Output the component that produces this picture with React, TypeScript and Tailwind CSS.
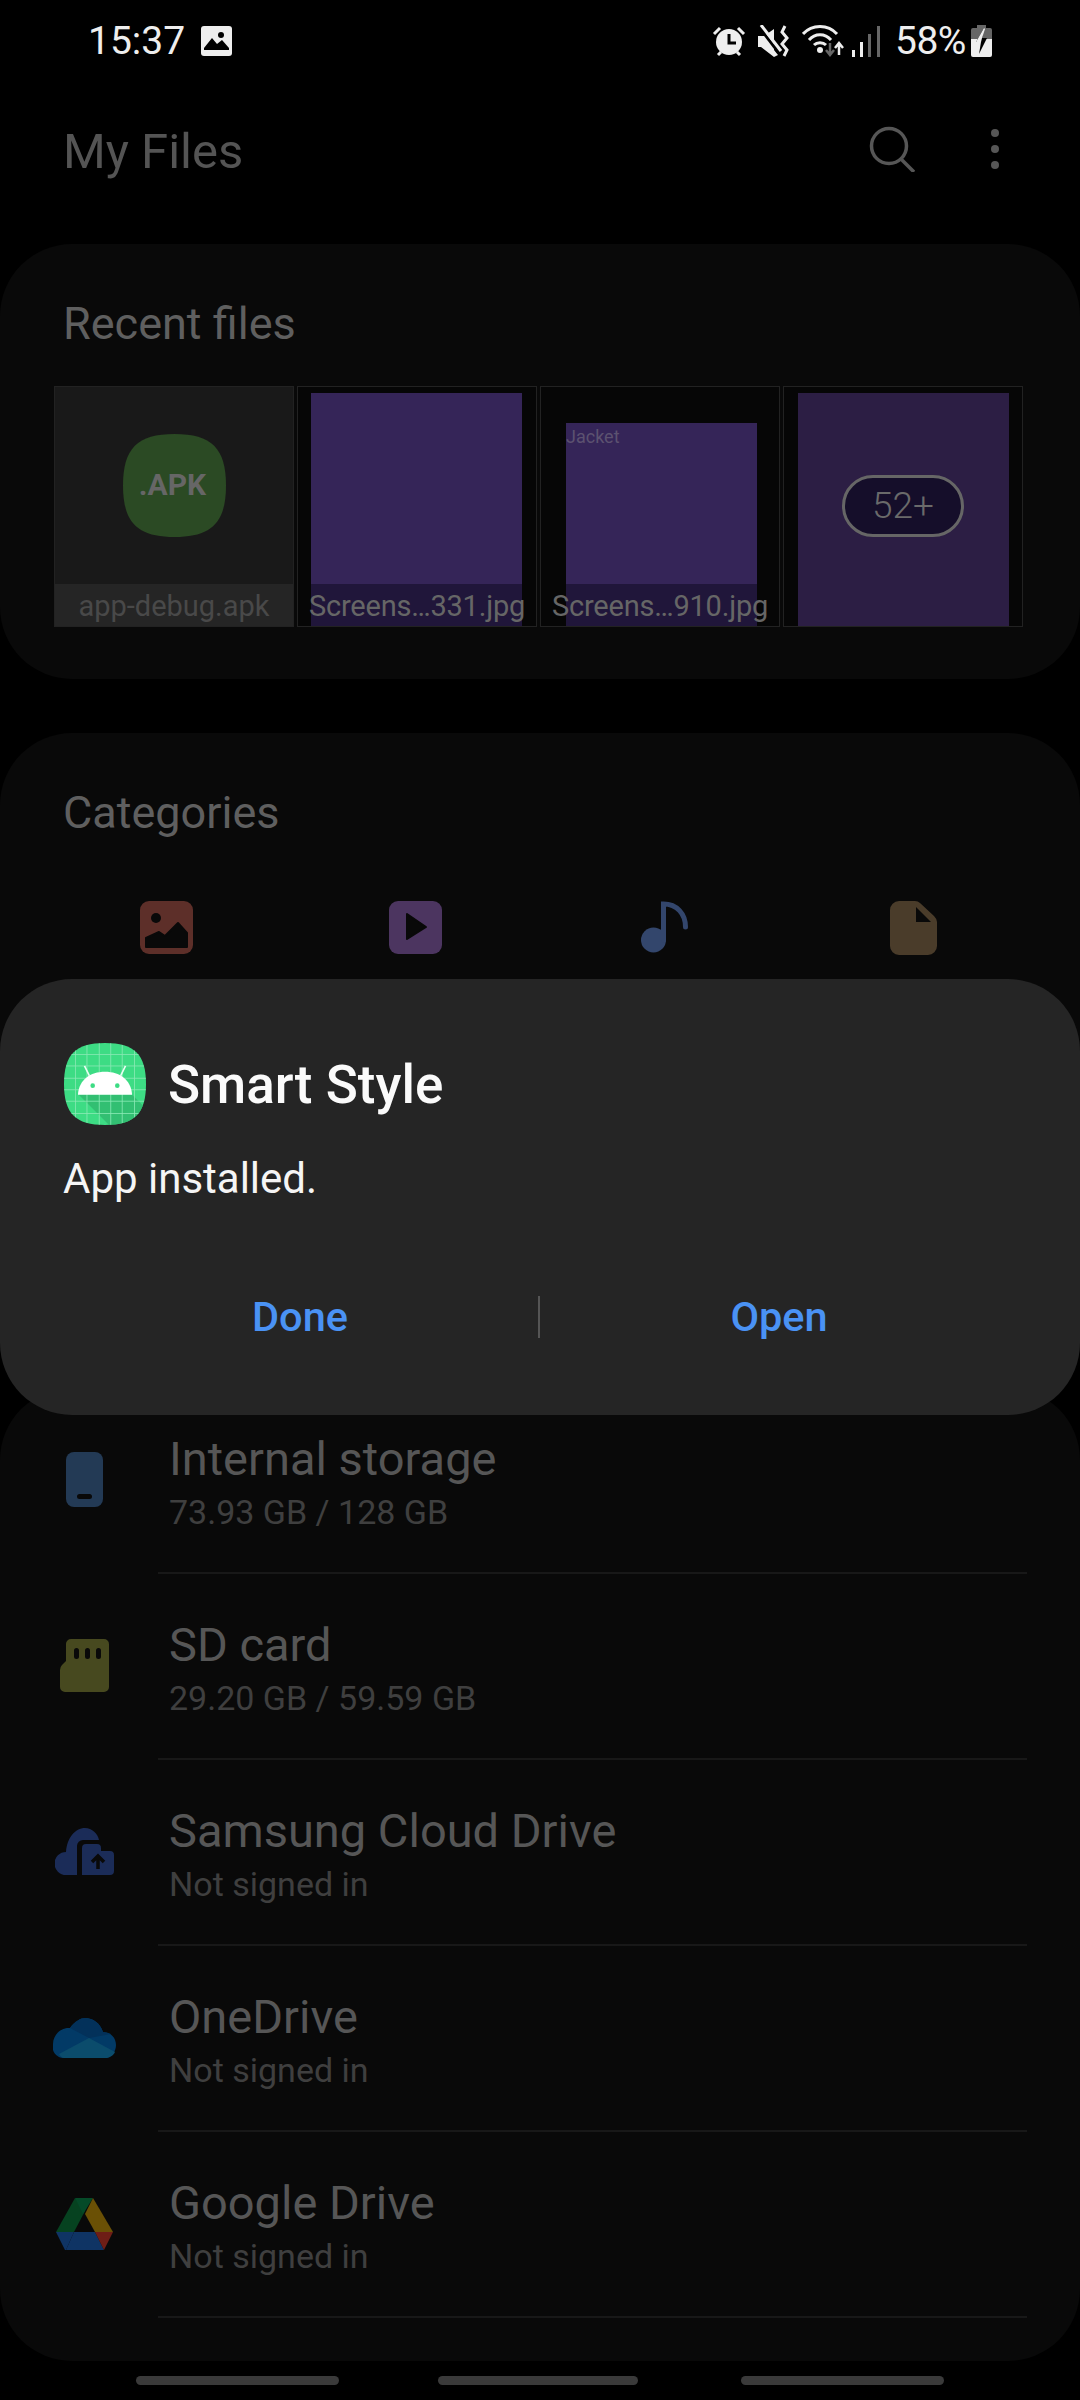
const Roboto = "font-['Roboto',sans-serif]";

function Squircle({ fill }: { fill: string }) {
  return <path d="M50 0C86 0 100 14 100 50C100 86 86 100 50 100C14 100 0 86 0 50C0 14 14 0 50 0Z" fill={fill} />;
}

function AppIcon() {
  const lines = [14, 28, 43, 57, 71, 86];
  return (
    <svg viewBox="0 0 100 100" className="w-[82px] h-[82px] shrink-0">
      <defs>
        <clipPath id="sq"><path d="M50 0C86 0 100 14 100 50C100 86 86 100 50 100C14 100 0 86 0 50C0 14 14 0 50 0Z" /></clipPath>
      </defs>
      <Squircle fill="#3ddc84" />
      <g clipPath="url(#sq)">
        <path d="M18 63L83 63L100 80L100 100L55 100Z" fill="#2fb56c" opacity="0.75" />
        {lines.map((l) => (
          <g key={l} stroke="#8be9b5" strokeWidth="1">
            <line x1={l} y1="0" x2={l} y2="100" />
            <line x1="0" y1={l} x2="100" y2={l} />
          </g>
        ))}
      </g>
      <path d="M17 63C18 45 32 35 50 35C68 35 82 45 83 63Z" fill="#fff" />
      <path d="M31 40L25 28M69 40L75 28" stroke="#e8fff2" strokeWidth="2" />
      <circle cx="35" cy="52" r="2.8" fill="#3ddc84" />
      <circle cx="65" cy="52" r="2.8" fill="#3ddc84" />
    </svg>
  );
}

function StatusImage() {
  return (
    <svg viewBox="0 0 31 30" className="w-[31px] h-[30px]">
      <path d="M3 0H28A3 3 0 0 1 31 3V27A3 3 0 0 1 28 30H3A3 3 0 0 1 0 27V3A3 3 0 0 1 3 0Z" fill="#eee" />
      <circle cx="20" cy="9" r="3" fill="#000" />
      <path d="M3 22L11 12L16 18L21 14L28 22V24H3Z" fill="#000" />
    </svg>
  );
}

function StatusRight() {
  return (
    <div className="flex items-center">
      <svg viewBox="0 0 34 32" className="w-[34px] h-[32px]">
        <circle cx="17" cy="17" r="13" fill="#eee" />
        <path d="M17 9V18H24" stroke="#000" strokeWidth="3" fill="none" />
        <path d="M2 9L8 3M32 9L26 3M6 30L9 27M28 30L25 27" stroke="#eee" strokeWidth="3" />
      </svg>
      <svg viewBox="0 0 32 32" className="w-[32px] h-[32px] ml-[12px]">
        <path d="M0 11H6L16 4V25L20 30L16 32L3 22H0Z" fill="#eee" />
        <path d="M1 2L21 28" stroke="#000" strokeWidth="3" />
        <path d="M3 0L23 26" stroke="#eee" strokeWidth="3" />
        <path d="M27 1L24 7L29 13L24 19L29 25L26 31" stroke="#eee" strokeWidth="3" fill="none" />
      </svg>
      <svg viewBox="0 0 43 32" className="w-[43px] h-[32px] ml-[12px]">
        <path d="M1 9C10 -1 26 -1 35 9M7 15C13 8 23 8 29 15M12 20C15 17 21 17 24 20" stroke="#eee" strokeWidth="3" fill="none" />
        <circle cx="18" cy="25" r="3" fill="#eee" />
        <path d="M28 18V28M24 25L28 30L32 25" stroke="#666" strokeWidth="2.5" fill="none" />
        <path d="M37 30V19M33 23L37 18L41 23" stroke="#eee" strokeWidth="2.5" fill="none" />
      </svg>
      <svg viewBox="0 0 28 32" className="w-[28px] h-[32px] ml-[7px]">
        <rect x="0" y="25" width="3" height="7" fill="#eee" />
        <rect x="8" y="17" width="3" height="15" fill="#eee" />
        <rect x="16" y="9" width="3" height="23" fill="#666" />
        <rect x="25" y="1" width="3" height="31" fill="#666" />
      </svg>
      <span className="ml-[15px] w-[70px] text-[39px] leading-[32px] text-[#eeeeee] tracking-[-0.5px] whitespace-nowrap">58%</span>
      <svg viewBox="0 0 21 32" className="w-[21px] h-[32px] ml-[6px]">
        <path d="M6 0H15V3H19A2 2 0 0 1 21 5V14H0V5A2 2 0 0 1 2 3H6Z" fill="#666" />
        <path d="M0 14H21V30A2 2 0 0 1 19 32H2A2 2 0 0 1 0 30Z" fill="#eee" />
        <path d="M13 3L5 17H10L8 29L16 13H11Z" fill="#000" />
        <path d="M13 3L5 17H10L11 13H11L14 4Z" fill="#eee" />
      </svg>
    </div>
  );
}

function Tile({ children, bg = "bg-[#060606]" }: { children: React.ReactNode; bg?: string }) {
  return <div className={`relative w-[240px] h-[241px] border border-[#222222] overflow-hidden flex justify-center ${bg}`}>{children}</div>;
}

function Strip({ label, color, bg, size }: { label: string; color: string; bg: string; size: string }) {
  return (
    <div className={`absolute left-0 right-0 bottom-0 h-[42px] pt-[1px] flex justify-center items-center whitespace-nowrap leading-[42px] ${size} ${color} ${bg}`}>
      {label}
    </div>
  );
}

function PictureIcon() {
  return (
    <svg viewBox="0 0 53 53" className="w-[53px] h-[53px]">
      <rect width="53" height="53" rx="9" fill="#5d2f29" />
      <circle cx="16" cy="17" r="5" fill="#090909" />
      <path d="M6 37L19 31L25 35L38 22L47 32V46H6Z" fill="#090909" stroke="#090909" strokeWidth="2" strokeLinejoin="round" />
    </svg>
  );
}
function VideoIcon() {
  return (
    <svg viewBox="0 0 53 53" className="w-[53px] h-[53px]">
      <rect width="53" height="53" rx="9" fill="#4c3560" />
      <path d="M18 13L37 26L18 38Z" fill="#090909" stroke="#090909" strokeWidth="2" strokeLinejoin="round" />
    </svg>
  );
}
function MusicIcon() {
  return (
    <svg viewBox="0 0 47 52" className="w-[47px] h-[52px]">
      <circle cx="12.500" cy="39" r="12.500" fill="#33466c" />
      <path d="M22.500 39V3C36 3 44.500 13 44.500 26" stroke="#33466c" strokeWidth="5" fill="none" strokeLinecap="round" />
    </svg>
  );
}
function DocIcon() {
  return (
    <svg viewBox="0 0 47 54" className="w-[47px] h-[54px]">
      <path d="M9 0H25Q28 0 30 2L44 15Q47 18 47 21V45A9 9 0 0 1 38 54H9A9 9 0 0 1 0 45V9A9 9 0 0 1 9 0Z" fill="#4a3c2a" />
      <path d="M26 6L41 21H26Z" fill="#090909" />
    </svg>
  );
}

function PhoneIcon() {
  return (
    <svg viewBox="0 0 37 55" className="w-[37px] h-[55px]">
      <rect width="37" height="55" rx="8" fill="#233a55" />
      <rect x="11" y="42" width="15" height="5" rx="2.500" fill="#090909" />
    </svg>
  );
}
function SdIcon() {
  return (
    <svg viewBox="0 0 49 53" className="w-[49px] h-[53px]">
      <path d="M6 5A5 5 0 0 1 11 0H44A5 5 0 0 1 49 5V48A5 5 0 0 1 44 53H5A5 5 0 0 1 0 48V31Q0 28 2 26L6 22Z" fill="#47491f" />
      <rect x="14" y="9" width="5" height="11" rx="2.500" fill="#090909" />
      <rect x="25" y="9" width="5" height="11" rx="2.500" fill="#090909" />
      <rect x="36" y="9" width="5" height="11" rx="2.500" fill="#090909" />
    </svg>
  );
}
function CloudIcon() {
  return (
    <svg viewBox="0 0 59 47" className="w-[59px] h-[47px]">
      <path d="M22 47H11A11 11 0 0 1 11 24C12 10 20 0 30 0C37 0 43 6 44 12H28A6 6 0 0 0 22 18Z" fill="#1b2c58" />
      <path d="M27 20A4 4 0 0 1 31 16H42A4 4 0 0 1 46 20V23H55A4 4 0 0 1 59 27V43A4 4 0 0 1 55 47H27Z" fill="#1b2c58" />
      <path d="M43 41V28M37 34L43 28L49 34" stroke="#090909" strokeWidth="3.500" fill="none" />
    </svg>
  );
}
function OneDriveIcon() {
  return (
    <svg viewBox="0 0 63 40" className="w-[63px] h-[40px]">
      <path d="M11 40A11 11 0 0 1 0 26C0 17 8 9 17 10C22 3 28 0 32 0C40 0 47 5 50 14C58 14 63 20 63 27C63 34 58 40 52 40Z" fill="#023a66" />
      <path d="M17 10C22 3 28 0 32 0C40 0 47 5 50 14L58 16L36 20Z" fill="#03315a" />
      <path d="M6 36L36 20L62 34C60 38 56 40 52 40H11C9 40 7 38 6 36Z" fill="#0b4c6c" />
    </svg>
  );
}
function DriveIcon() {
  return (
    <svg viewBox="0 0 57 52" className="w-[57px] h-[52px]">
      <path d="M19 0L0 34H18L29 13Z" fill="#064220" />
      <path d="M19 0H37L29 13L27 16Z" fill="#054a28" />
      <path d="M37 0L57 34H39L29 16Z" fill="#6a5005" />
      <path d="M0 34H18L10 52H9Z" fill="#0f3464" />
      <path d="M18 34H39L48 52H10Z" fill="#0f3464" />
      <path d="M39 34H57L48 52Z" fill="#6e1e16" />
    </svg>
  );
}

function Row({ icon, title, sub }: { icon: React.ReactNode; title: string; sub: string }) {
  return (
    <div className="flex h-[186px]">
      <div className="w-[158px] shrink-0 flex items-center justify-center pl-[10px] pb-[3px]">{icon}</div>
      <div className="flex-1 mr-[53px] pl-[11px] pt-[44px] border-b-2 border-[#181818]">
        <div className="text-[47px] leading-[54px] text-[#565656]">{title}</div>
        <div className="text-[34px] leading-[40px] mt-[6px] text-[#3f3f3f]">{sub}</div>
      </div>
    </div>
  );
}

export default function App() {
  return (
    <div className={`relative w-[1080px] h-[2400px] bg-black overflow-hidden ${Roboto}`}>
      <div className="flex justify-between items-center pl-[88px] pr-[88px] pt-[22px] h-[60px]">
        <div className="flex items-center">
          <span className="text-[39px] leading-[32px] text-[#eeeeee] w-[97px] whitespace-nowrap">15:37</span>
          <span className="ml-[16px]"><StatusImage /></span>
        </div>
        <StatusRight />
      </div>

      <div className="flex items-center justify-between pl-[63px] pr-[81px] h-[184px] pb-[6px]">
        <span className="text-[49px] leading-[56px] text-[#545454] mt-[6px]">My Files</span>
        <div className="flex items-center">
          <svg viewBox="0 0 46 46" className="w-[46px] h-[46px]">
            <circle cx="20" cy="20" r="17.500" fill="none" stroke="#565656" strokeWidth="3.500" />
            <path d="M31 32L45 46" stroke="#565656" strokeWidth="3.500" />
          </svg>
          <div className="ml-[76px] flex flex-col gap-[8px]">
            <div className="w-[8px] h-[8px] rounded-full bg-[#565656]" />
            <div className="w-[8px] h-[8px] rounded-full bg-[#565656]" />
            <div className="w-[8px] h-[8px] rounded-full bg-[#565656]" />
          </div>
        </div>
      </div>

      <section className="h-[435px] bg-[#090909] rounded-[72px] pt-[54px]">
        <h2 className="pl-[63px] text-[45px] leading-[52px] font-normal text-[#5f5f5f]">Recent files</h2>
        <div className="flex ml-[54px] mt-[36px] gap-[3px]">
          <Tile bg="bg-[#191919]">
            <svg viewBox="0 0 100 100" className="absolute left-[68px] top-[47px] w-[103px] h-[103px]">
              <Squircle fill="#2b4a24" />
            </svg>
            <span className="absolute left-0 right-[3px] top-[80px] text-center text-[30px] leading-[36px] font-bold text-[#666666]">.APK</span>
            <Strip label="app-debug.apk" color="text-[#494949]" bg="bg-[#252525]" size="text-[29px]" />
          </Tile>
          <Tile>
            <div className="absolute left-[13px] top-[6px] bottom-0 w-[211px] bg-[#352558]" />
            <div className="absolute left-[13px] bottom-0 w-[211px] h-[42px] bg-[#20163a]" />
            <Strip label="Screens…331.jpg" color="text-[#666666]" bg="bg-transparent" size="text-[29px] tracking-[-0.2px]" />
          </Tile>
          <Tile>
            <div className="absolute left-[25px] top-[36px] bottom-0 w-[191px] bg-[#352558]" />
            <div className="absolute left-[25px] bottom-0 w-[191px] h-[42px] bg-[#20163a]" />
            <span className="absolute left-[25px] top-[39px] text-[18px] leading-[22px] text-[#5c5270]">Jacket</span>
            <Strip label="Screens…910.jpg" color="text-[#666666]" bg="bg-transparent" size="text-[29px] tracking-[-0.2px]" />
          </Tile>
          <Tile>
            <div className="absolute left-[14px] top-[6px] bottom-0 w-[211px] bg-[#2c1e44]" />
            <div className="absolute left-[58px] top-[88px] w-[122px] h-[62px] rounded-[31px] border-[3px] border-[#666666] bg-[#150e2a] flex items-center justify-center text-[37px] font-light text-[#6a6a6a]">52+</div>
          </Tile>
        </div>
      </section>

      <section className="h-[640px] mt-[54px] bg-[#090909] rounded-[72px] pt-[54px]">
        <h2 className="pl-[63px] text-[45px] leading-[52px] font-normal text-[#5f5f5f]">Categories</h2>
        <div className="flex mt-[62px]">
          <div className="w-[250px] pl-[140px]"><PictureIcon /></div>
          <div className="w-[250px] pl-[139px]"><VideoIcon /></div>
          <div className="w-[250px] pl-[141px]"><MusicIcon /></div>
          <div className="w-[250px] pl-[140px]"><DocIcon /></div>
        </div>
      </section>

      <section className="absolute left-0 right-0 top-[1388px] h-[973px] bg-[#090909] rounded-[72px]">
        <Row icon={<PhoneIcon />} title="Internal storage" sub="73.93 GB / 128 GB" />
        <Row icon={<SdIcon />} title="SD card" sub="29.20 GB / 59.59 GB" />
        <Row icon={<CloudIcon />} title="Samsung Cloud Drive" sub="Not signed in" />
        <Row icon={<OneDriveIcon />} title="OneDrive" sub="Not signed in" />
        <Row icon={<DriveIcon />} title="Google Drive" sub="Not signed in" />
      </section>

      <div className="absolute left-0 right-0 top-[979px] h-[436px] bg-[#252525] rounded-[72px] pl-[63px] pr-[64px] pt-[64px]">
        <div className="flex items-center">
          <span className="ml-[1px]"><AppIcon /></span>
          <span className="ml-[22px] mt-[2px] text-[53px] leading-[60px] font-medium text-[#fafafa]">Smart Style</span>
        </div>
        <p className="mt-[30px] text-[42px] leading-[48px] text-[#f5f5f5]">App installed.</p>
        <div className="flex items-center mt-[90px] -ml-[63px] -mr-[64px]">
          <div className="w-[538px] pl-[62px] text-center text-[41.5px] leading-[48px] font-medium text-[#4a92f4]">Done</div>
          <div className="w-[2px] h-[42px] bg-[#555555]" />
          <div className="w-[540px] pr-[62px] text-center text-[41.5px] leading-[48px] font-medium text-[#4a92f4]">Open</div>
        </div>
      </div>

      <div className="absolute left-[136px] top-[2376px] flex">
        <div className="w-[203px] h-[9px] rounded-full bg-[#3a3a3a]" />
        <div className="ml-[99px] w-[200px] h-[9px] rounded-full bg-[#3a3a3a]" />
        <div className="ml-[103px] w-[203px] h-[9px] rounded-full bg-[#3a3a3a]" />
      </div>
    </div>
  );
}
